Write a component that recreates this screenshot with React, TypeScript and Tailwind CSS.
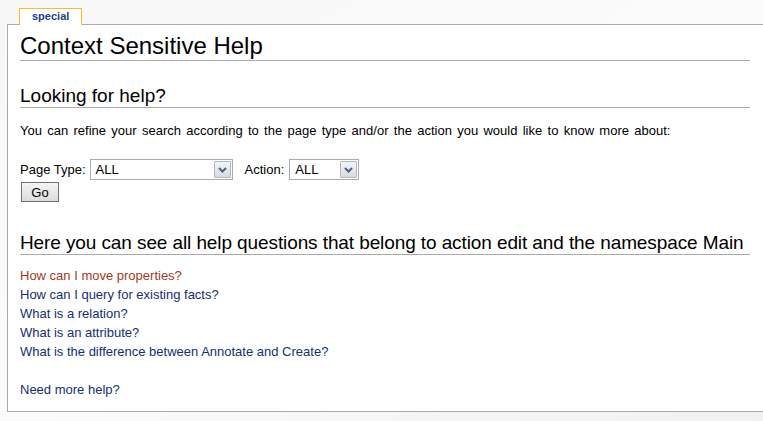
import React from "react";

const links = [
  { label: "How can I move properties?", visited: true },
  { label: "How can I query for existing facts?", visited: false },
  { label: "What is a relation?", visited: false },
  { label: "What is an attribute?", visited: false },
  { label: "What is the difference between Annotate and Create?", visited: false },
];

const Chevron = () => (
  <svg width="9" height="6" viewBox="0 0 9 6" className="block">
    <path d="M1 1 L4.5 4.5 L8 1" fill="none" stroke="#4d6185" strokeWidth="2" />
  </svg>
);

const FakeSelect: React.FC<{ value: string; width: string }> = ({ value, width }) => (
  <div
    className={`flex items-center justify-between h-[21px] border border-[#a5acb2] bg-white pl-[5px] pr-[1px] ${width}`}
  >
    <span className="text-[13px] leading-none text-black">{value}</span>
    <div className="flex items-center justify-center w-[17px] h-[17px] border border-[#b4b8be] rounded-[1px] bg-gradient-to-b from-[#f4f5f7] to-[#d8dbe0]">
      <Chevron />
    </div>
  </div>
);

const App: React.FC = () => {
  return (
    <div
      className="w-[763px] h-[421px] overflow-hidden bg-gradient-to-br from-[#f7f7f7] via-[#fbfbfb] to-[#f1f1f1]"
      style={{ fontFamily: '"Liberation Sans", Arial, sans-serif' }}
    >
      {/* tabs */}
      <div className="flex pt-[8px] pl-[19px]">
        <div className="relative z-10 h-[17px] mb-[-1px] px-[12px] bg-white border border-b-0 border-[#fabd23] text-[11px] font-bold leading-[15px] text-[#1e3a9a]">
          special
        </div>
      </div>

      {/* content box */}
      <div className="ml-[7px] mr-[-40px] h-[388px] bg-white border border-[#aaaaaa] pl-[12px] pr-[52px] pt-[7px]">
        <h1 className="text-[24px] leading-[28px] text-black border-b border-[#aaaaaa]">
          Context Sensitive Help
        </h1>

        <h2 className="mt-[24px] text-[19px] leading-[22px] text-black border-b border-[#aaaaaa]">
          Looking for help?
        </h2>

        <p className="mt-[15px] text-[13px] leading-[16px] text-black [word-spacing:1.7px] whitespace-nowrap">
          You can refine your search according to the page type and/or the action you would like to know more about:
        </p>

        <div className="mt-[20px] flex items-center text-[13px] text-black">
          <span className="mr-[4px]">Page Type:</span>
          <FakeSelect value="ALL" width="w-[143px]" />
          <span className="ml-[12px] mr-[5px]">Action:</span>
          <FakeSelect value="ALL" width="w-[70px]" />
        </div>
        <div className="mt-[2px] flex">
          <button className="ml-[1px] h-[20px] w-[38px] border border-[#707070] bg-gradient-to-b from-[#f4f4f4] to-[#dcdcdc] text-[13px] text-black leading-none">
            Go
          </button>
        </div>

        <h2 className="mt-[30px] text-[19px] leading-[22px] tracking-[-0.1px] whitespace-nowrap text-black border-b border-[#aaaaaa]">
          Here you can see all help questions that belong to action edit and the namespace Main
        </h2>

        <ul className="mt-[11px] text-[13px] leading-[19px]">
          {links.map((l) => (
            <li key={l.label} className={l.visited ? "text-[#a8391c]" : "text-[#12307a]"}>
              {l.label}
            </li>
          ))}
          <li className="h-[19px]" />
          <li className="text-[#12307a]">Need more help?</li>
        </ul>
      </div>
    </div>
  );
};

export default App;
